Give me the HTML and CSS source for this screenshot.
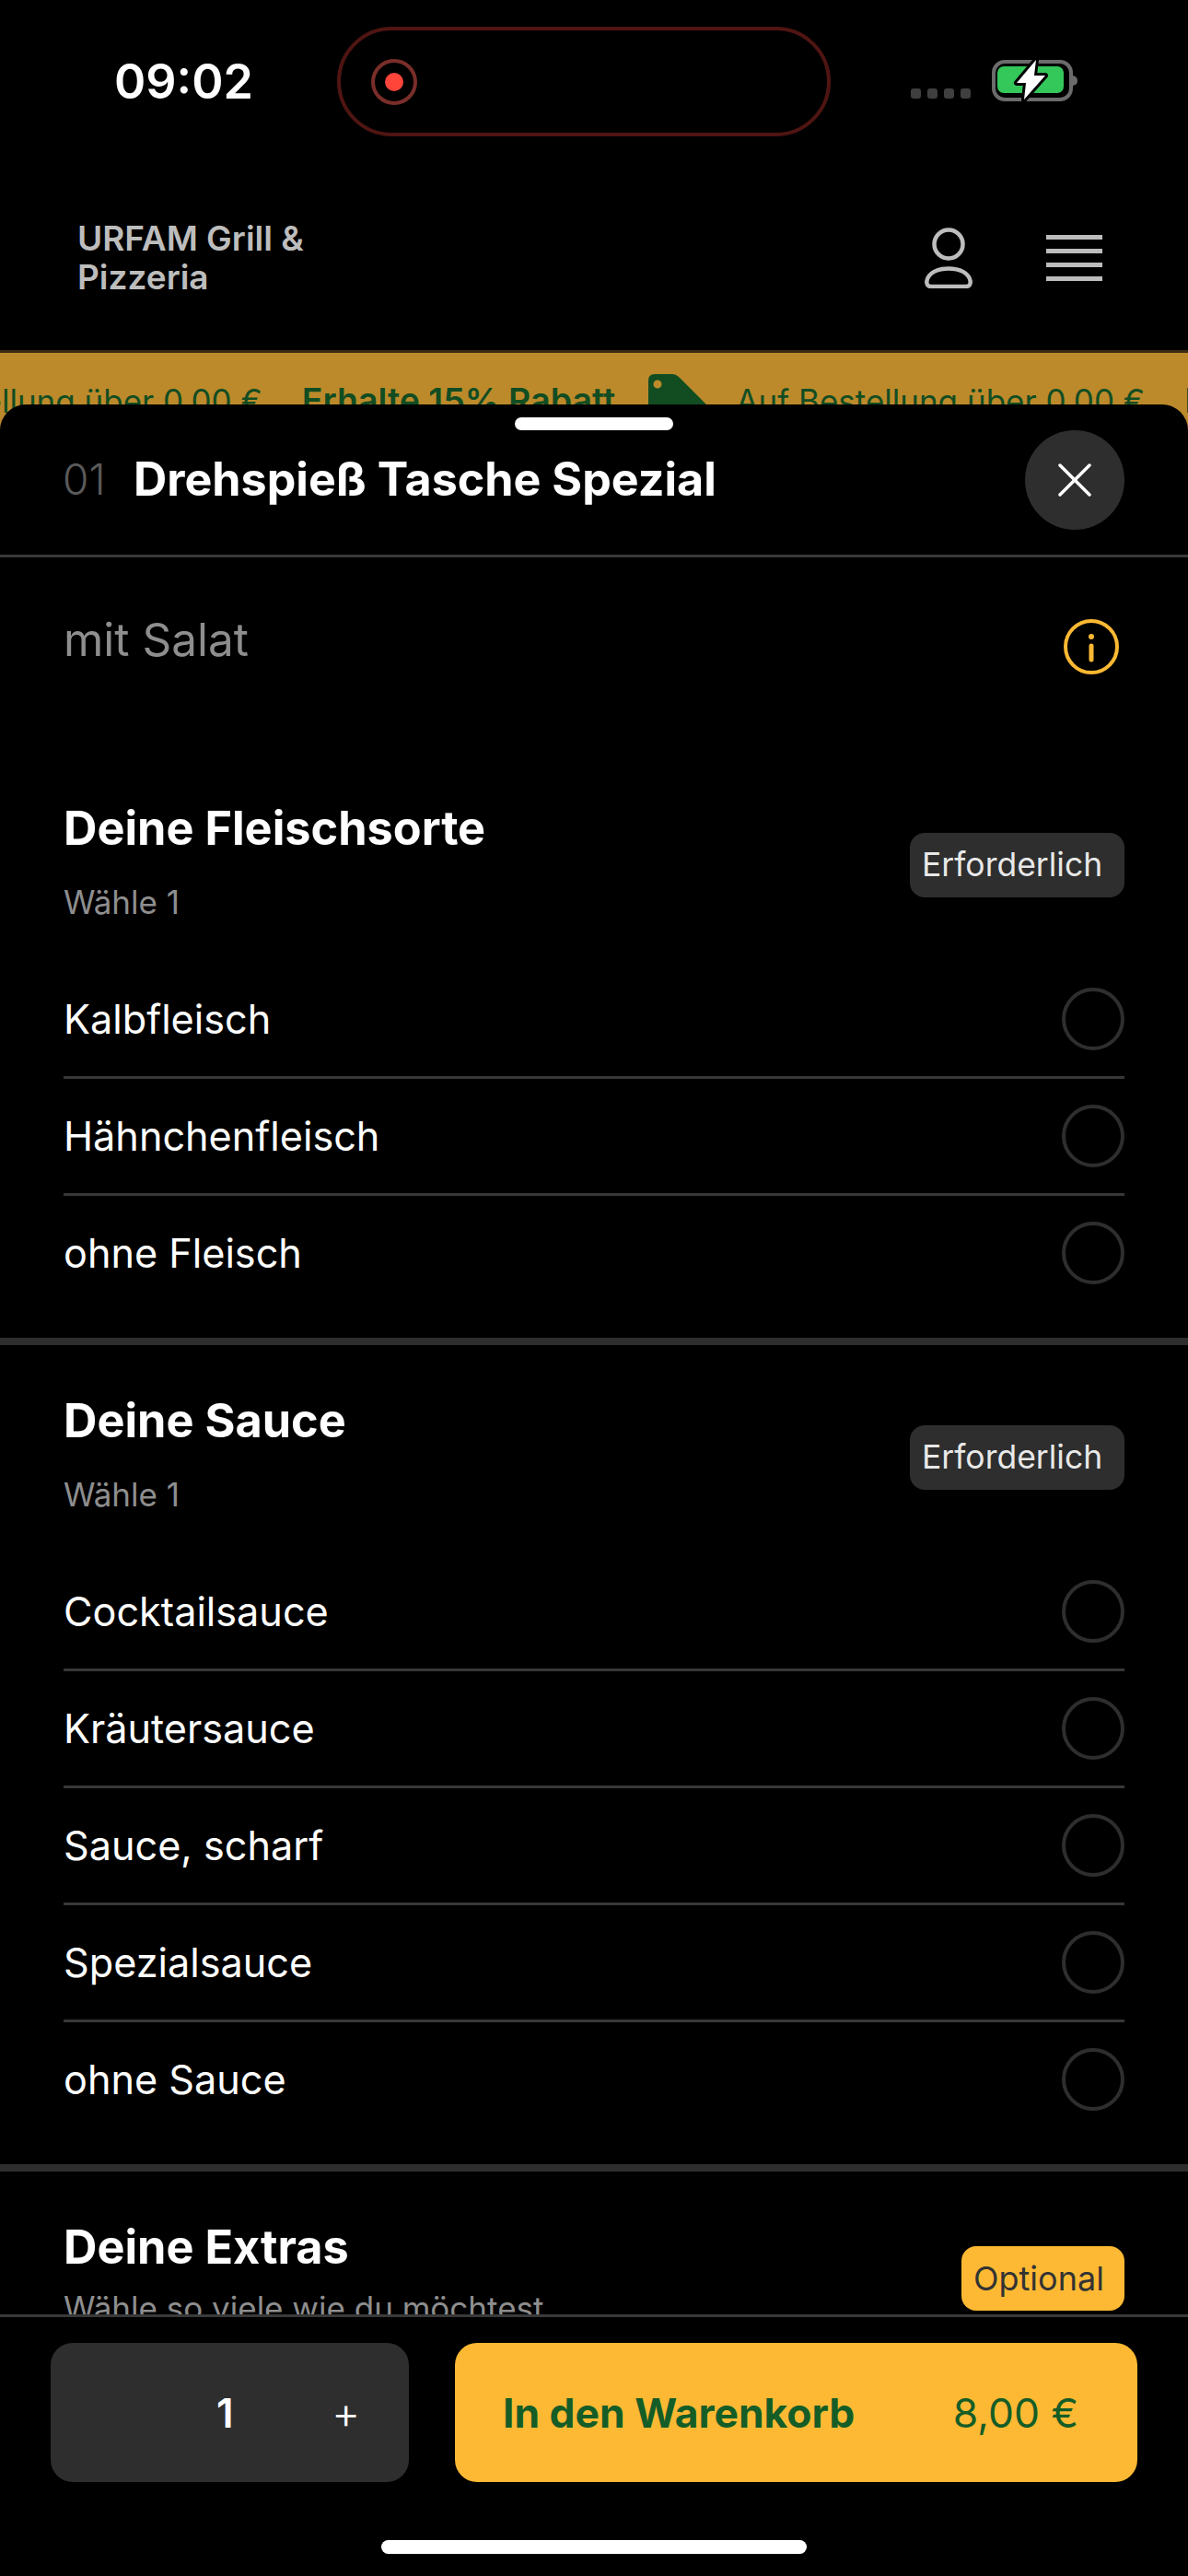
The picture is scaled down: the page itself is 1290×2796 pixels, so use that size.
FILE: index.html
```html
<!doctype html>
<html lang="de">
	<head>
		<title>URFAM Grill &amp; Pizzeria</title>
		<meta charset="utf-8">
		<link rel="stylesheet" href="styles.css">
	</head>
	<body>
		<div class="phone">

			<div class="statusBar">
				<div class="time">09:02</div>
				<div class="island">
					<div class="recRing"><div class="recDot"></div></div>
				</div>
				<div class="statusRight">
					<div class="signal"><span></span><span></span><span></span><span></span></div>
					<svg class="battery" width="96" height="48" viewBox="0 0 96 48">
						<rect x="2" y="4" width="84" height="41" rx="12" fill="none" stroke="#6b6b6b" stroke-width="4"/>
						<rect x="6" y="9" width="72" height="29" rx="7" fill="#34c759"/>
						<path d="M88 19 Q93 20 93 24.5 Q93 29 88 30 Z" fill="#6b6b6b"/>
						<path d="M48 2 L27 27 L37 27 L35 45 L58 19 L46 19 Z" fill="#fff" stroke="#000" stroke-width="6" stroke-linejoin="round" paint-order="stroke"/>
					</svg>
				</div>
			</div>

			<div class="topBar">
				<div class="shopName">URFAM Grill &amp; Pizzeria</div>
				<div class="topIcons">
					<svg width="52" height="66" viewBox="0 0 52 66" fill="none" stroke="#bdbdbd" stroke-width="4.5">
						<circle cx="26" cy="18" r="15.5"/>
						<path d="M7 64 H45 C49 64 50 61 49.6 58 C48 49 38 44.5 26 44.5 C14 44.5 4 49 2.4 58 C2 61 3 64 7 64 Z"/>
					</svg>
					<div class="burger"><span></span><span></span><span></span><span></span></div>
				</div>
			</div>

			<div class="promo">
				<div class="promoTrack">
					<span>Auf Bestellung über 0,00 €</span>
					<b>Erhalte 15% Rabatt</b>
					<svg class="tag" width="70" height="60" viewBox="0 0 70 60">
						<path d="M7 0 H26 Q30 0 33 3 L68 38 Q72 42 68 46 L50 60 H12 L3 42 Q0 38 0 34 V7 Q0 0 7 0 Z M10 6.500 A4.500 4.500 0 1 0 10 15.500 A4.500 4.500 0 1 0 10 6.500 Z" fill="#124d22" fill-rule="evenodd"/>
					</svg>
					<span>Auf Bestellung über 0,00 €</span>
					<b>Erhalte 15% Rabatt</b>
				</div>
			</div>

			<div class="sheet">
				<div class="handle"></div>
				<div class="sheetHead">
					<span class="itemNo">01</span>
					<span class="itemName">Drehspieß Tasche Spezial</span>
					<div class="closeBtn">
						<svg width="36" height="36" viewBox="0 0 36 36" stroke="#fff" stroke-width="3.5" stroke-linecap="round">
							<line x1="2" y1="2" x2="34" y2="34"/>
							<line x1="34" y1="2" x2="2" y2="34"/>
						</svg>
					</div>
				</div>

				<div class="sheetBody">
					<div class="descRow">
						<span class="descText">mit Salat</span>
						<svg class="infoIcon" width="60" height="60" viewBox="0 0 60 60" fill="none" stroke="#fdb933" stroke-width="4">
							<circle cx="30" cy="30" r="28"/>
							<line x1="30" y1="29" x2="30" y2="44" stroke-width="5" stroke-linecap="round"/>
							<circle cx="30" cy="19" r="3" fill="#fdb933" stroke="none"/>
						</svg>
					</div>

					<div class="group">
						<div class="groupHead">
							<div class="groupText">
								<div class="groupTitle">Deine Fleischsorte</div>
								<div class="groupHint">Wähle 1</div>
							</div>
							<span class="badge required">Erforderlich</span>
						</div>
						<div class="option"><span>Kalbfleisch</span><i class="radio"></i></div>
						<div class="option"><span>Hähnchenfleisch</span><i class="radio"></i></div>
						<div class="option"><span>ohne Fleisch</span><i class="radio"></i></div>
					</div>

					<div class="group">
						<div class="groupHead">
							<div class="groupText">
								<div class="groupTitle">Deine Sauce</div>
								<div class="groupHint">Wähle 1</div>
							</div>
							<span class="badge required">Erforderlich</span>
						</div>
						<div class="option"><span>Cocktailsauce</span><i class="radio"></i></div>
						<div class="option"><span>Kräutersauce</span><i class="radio"></i></div>
						<div class="option"><span>Sauce, scharf</span><i class="radio"></i></div>
						<div class="option"><span>Spezialsauce</span><i class="radio"></i></div>
						<div class="option"><span>ohne Sauce</span><i class="radio"></i></div>
					</div>

					<div class="group">
						<div class="groupHead">
							<div class="groupText">
								<div class="groupTitle">Deine Extras</div>
								<div class="groupHint tightHint">Wähle so viele wie du möchtest</div>
							</div>
							<span class="badge optional">Optional</span>
						</div>
					</div>
				</div>

				<div class="footer">
					<div class="footerRow">
						<div class="stepper">
							<span class="qty">1</span>
							<span class="plus">+</span>
						</div>
						<div class="addBtn">
							<b>In den Warenkorb</b>
							<span>8,00 €</span>
						</div>
					</div>
					<div class="homeBar"></div>
				</div>
			</div>

		</div>
	</body>
</html>
```

FILE: styles.css
```css
html,body{
	margin:0px;
	padding:0px;
	background:#000;
}

.phone{
	width:1290px;
	height:2796px;
	display:flex;
	flex-direction:column;
	overflow:hidden;
	background:#000;
	font-family:"Inter","Liberation Sans",sans-serif;
	color:#fff;
}

/** status bar **/
.statusBar{
	height:180px;
	flex:none;
	display:flex;
	align-items:flex-start;
	box-sizing:border-box;
	padding:29px 0 0 124px;
}
.time{
	width:242px;
	margin-top:29px;
	font-size:52px;
	line-height:62px;
	font-weight:600;
}
.island{
	width:536px;
	height:119px;
	box-sizing:border-box;
	border:4px solid #4f1512;
	border-radius:60px;
	display:flex;
	align-items:center;
	padding-left:33px;
}
.recRing{
	width:50px;
	height:50px;
	box-sizing:border-box;
	border:4px solid #7a2e29;
	border-radius:50%;
	display:flex;
	align-items:center;
	justify-content:center;
}
.recDot{
	width:20px;
	height:20px;
	border-radius:50%;
	background:#ff453a;
}
.statusRight{
	margin:34px 0 0 87px;
	height:48px;
	display:flex;
	align-items:flex-end;
	gap:23px;
}
.signal{
	display:flex;
	gap:7px;
	margin-bottom:4px;
}
.signal span{
	width:11px;
	height:11px;
	border-radius:3px;
	background:#3f3f3f;
}
.battery{
	display:block;
}

/** top bar **/
.topBar{
	height:200px;
	flex:none;
	display:flex;
	align-items:center;
	justify-content:space-between;
	box-sizing:border-box;
	padding:0 93px 0 84px;
}
.shopName{
	width:300px;
	font-size:37px;
	line-height:42px;
	font-weight:600;
	color:#bdbdbd;
}
.topIcons{
	display:flex;
	align-items:center;
	gap:80px;
}
.burger{
	width:61px;
	display:flex;
	flex-direction:column;
	gap:9.500px;
}
.burger span{
	height:5.500px;
	background:#bcbcbc;
}

/** promo strip, runs under the sheet **/
.promo{
	height:90px;
	flex:none;
	box-sizing:border-box;
	border-top:3px solid #3a2c14;
	background:#bc8a2b;
	overflow:hidden;
}
.promoTrack{
	display:flex;
	align-items:baseline;
	white-space:nowrap;
	margin-left:-159px;
	padding-top:30px;
	font-size:35px;
	line-height:44px;
	color:#124d22;
}
.promoTrack b{
	font-size:37.500px;
	font-weight:600;
	margin-left:43px;
}
.tag{
	flex:none;
	align-self:flex-start;
	margin-top:-7px;
	margin-left:36px;
	margin-right:25px;
}

/** sheet **/
.sheet{
	flex:1;
	min-height:0;
	position:relative;
	margin-top:-31px;
	display:flex;
	flex-direction:column;
	background:#000;
	border-radius:28px 28px 0 0;
	padding-top:14px;
}
.handle{
	width:172px;
	height:14px;
	flex:none;
	margin:0 auto;
	border-radius:7px;
	background:#fff;
}
.sheetHead{
	flex:none;
	height:135px;
	display:flex;
	align-items:flex-start;
	padding:0 69px 0 68px;
	border-bottom:3px solid #3a3a3a;
}
.itemNo{
	width:77px;
	flex:none;
	font-size:46px;
	line-height:106px;
	font-weight:300;
	color:#5a5a5a;
}
.itemName{
	flex:1;
	font-size:50.200px;
	line-height:106px;
	font-weight:700;
}
.closeBtn{
	width:108px;
	height:108px;
	flex:none;
	border-radius:50%;
	background:#2e2e2e;
	display:flex;
	align-items:center;
	justify-content:center;
}
.sheetBody{
	flex:1;
	min-height:0;
	overflow:hidden;
}
.descRow{
	height:212px;
	display:flex;
	align-items:flex-start;
	justify-content:space-between;
	box-sizing:border-box;
	padding:59px 75px 0 69px;
}
.descText{
	font-size:49.500px;
	line-height:60px;
	font-weight:400;
	color:#8e8e8e;
}
.infoIcon{
	margin-top:8px;
}

/** option groups **/
.group{
	padding:0 69px 27px 69px;
	border-bottom:8px solid #2e2e2e;
}
.groupHead{
	height:227px;
	display:flex;
	align-items:center;
	justify-content:space-between;
	box-sizing:border-box;
	padding-top:52px;
	padding-bottom:44px;
}
.groupText{
	align-self:flex-start;
}
.groupTitle{
	font-size:50.400px;
	line-height:60px;
	font-weight:700;
}
.groupHint{
	margin-top:28px;
	font-size:35px;
	line-height:44px;
	color:#8e8e8e;
}
.tightHint{
	margin-top:14px;
}
.badge{
	height:70px;
	box-sizing:border-box;
	padding-left:13px;
	border-radius:16px;
	line-height:70px;
}
.required{
	width:233px;
	margin-top:8px;
	font-size:35.500px;
	background:#2e2e2e;
	color:#e8e8e8;
}
.optional{
	width:177px;
	margin-bottom:3px;
	font-size:36px;
	background:#fdb933;
	color:#333;
}
.option{
	height:127px;
	display:flex;
	align-items:center;
	justify-content:space-between;
	box-sizing:border-box;
	border-bottom:3px solid #383838;
	font-size:43.200px;
}
.option:last-child{
	border-bottom-color:transparent;
}
.radio{
	width:68px;
	height:68px;
	box-sizing:border-box;
	border:4px solid #2e2e2e;
	border-radius:50%;
}

/** footer **/
.footer{
	flex:none;
	background:#000;
	border-top:3px solid #3a3a3a;
	padding:28px 55px 24px;
}
.footerRow{
	display:flex;
	gap:50px;
	height:151px;
}
.stepper{
	width:389px;
	flex:none;
	display:flex;
	align-items:center;
	box-sizing:border-box;
	padding-left:180px;
	border-radius:24px;
	background:#2e2e2e;
}
.qty{
	width:125px;
	font-size:44px;
	font-weight:600;
}
.plus{
	font-size:48px;
	font-weight:300;
}
.addBtn{
	flex:1;
	display:flex;
	align-items:center;
	justify-content:space-between;
	box-sizing:border-box;
	padding:0 64px 0 52px;
	border-radius:24px;
	background:#fdb933;
	color:#155d27;
	font-size:44.400px;
}
.addBtn b{
	font-weight:700;
}
.homeBar{
	width:462px;
	height:15px;
	margin:63px auto 0;
	border-radius:8px;
	background:#fff;
}
```
